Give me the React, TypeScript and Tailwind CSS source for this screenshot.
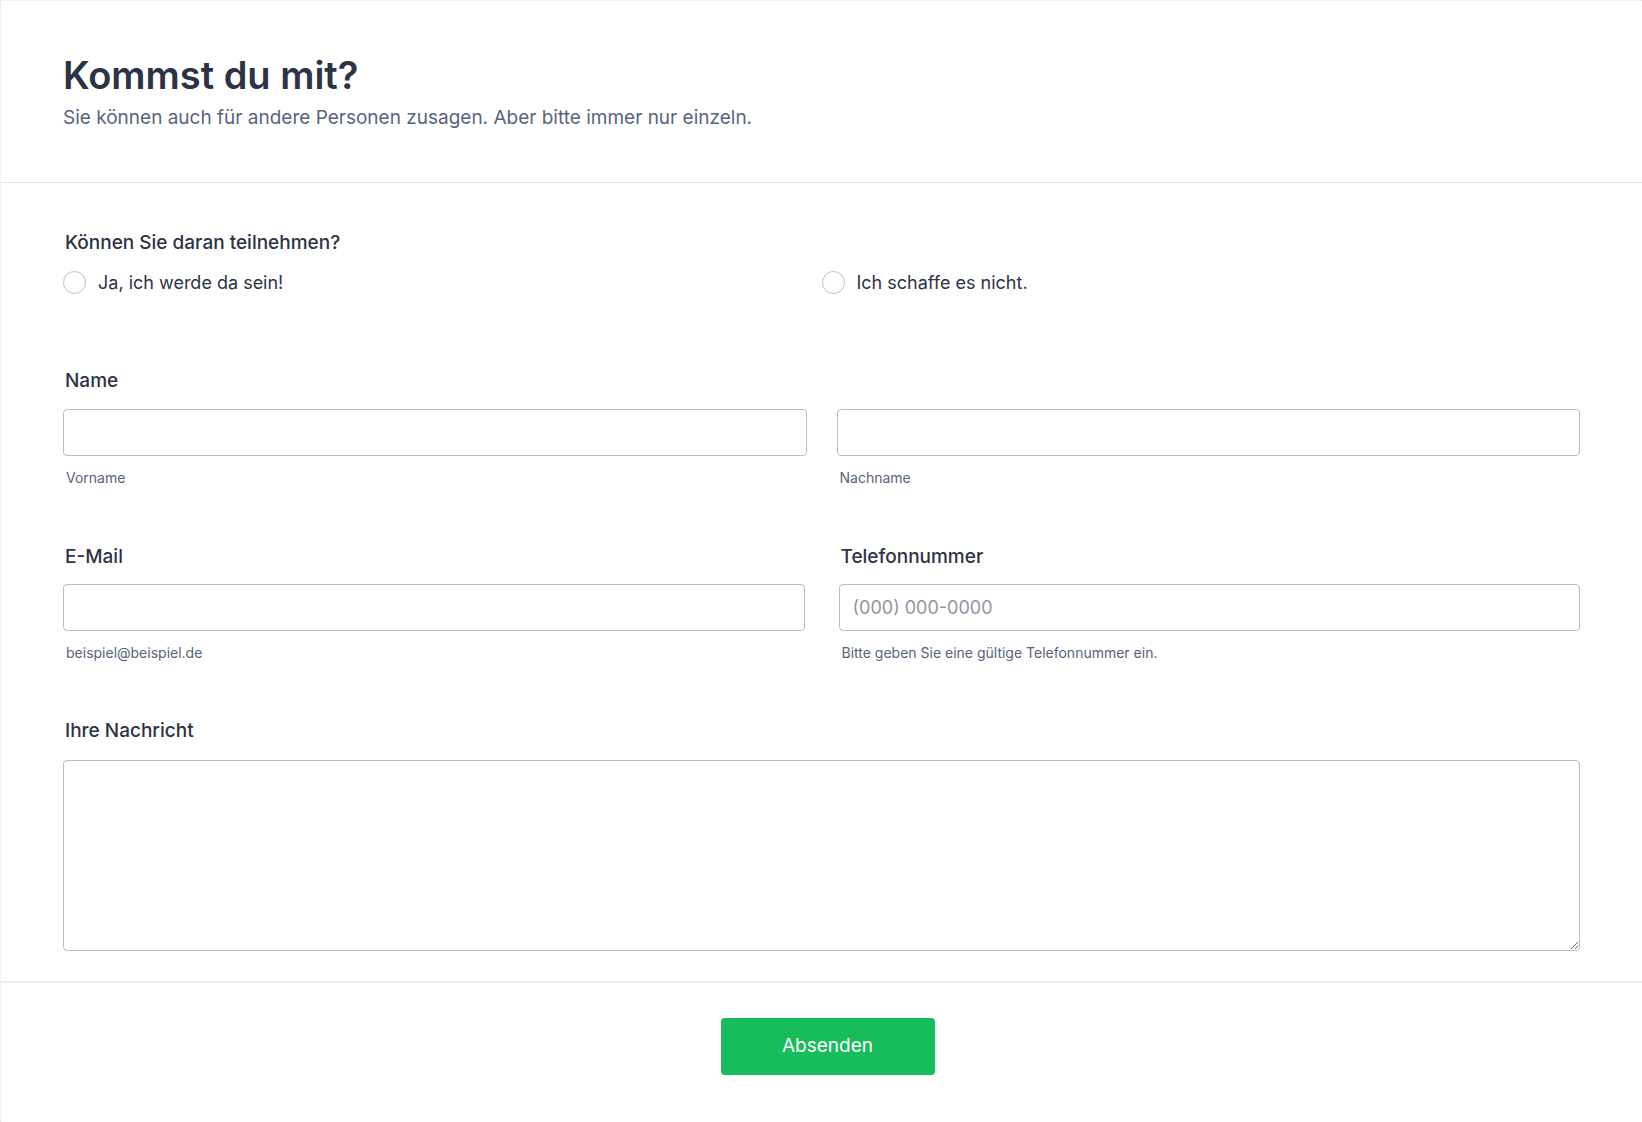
import React, { useState } from 'react';

const font = { fontFamily: 'Inter, "Noto Sans", sans-serif' };

const inputClass =
  'w-full h-[47px] border border-[#b8bdc9] rounded-[4px] bg-white px-[13px] text-[18px] text-[#2c3345] placeholder:text-[#8f96a3] outline-none focus:border-[#2e69ff]';

const Label = ({ children, htmlFor }: { children: React.ReactNode; htmlFor?: string }) => (
  <label htmlFor={htmlFor} className="block pl-[2px] text-[19px] leading-[27px] font-medium text-[#2c3345]">
    {children}
  </label>
);

const SubLabel = ({ children }: { children: React.ReactNode }) => (
  <p className="pl-[3px] mt-[11px] text-[14px] leading-[21px] text-[#57647e]">{children}</p>
);

const Radio = ({
  label,
  checked,
  onSelect,
}: {
  label: string;
  checked: boolean;
  onSelect: () => void;
}) => (
  <label className="flex items-center gap-[12px] h-[27px] cursor-pointer" onClick={onSelect}>
    <span className="w-[23px] h-[23px] rounded-full border-[1.5px] border-[#bcc1cc] bg-white flex items-center justify-center shrink-0">
      {checked && <span className="w-[11px] h-[11px] rounded-full bg-[#2e69ff]" />}
    </span>
    <span className="text-[18px] leading-[27px] text-[#2c3345]">{label}</span>
  </label>
);

export default function App() {
  const [attend, setAttend] = useState<string | null>(null);

  return (
    <div style={font} className="min-h-[1122px] bg-white border-l border-t border-dotted border-[#e3e5ea]">
      {/** Header */}
      <header className="px-[62px] pt-[51px] pb-[51px] border-b border-[#e3e5ea]">
        <h1 className="text-[38px] leading-[46px] font-semibold text-[#2c3345]">Kommst du mit?</h1>
        <p className="mt-[6px] text-[19px] leading-[27px] text-[#57647e]">
          Sie können auch für andere Personen zusagen. Aber bitte immer nur einzeln.
        </p>
      </header>

      <form className="px-[62px]" onSubmit={(e) => e.preventDefault()}>
        {/** Attendance */}
        <div className="pt-[46px]">
          <Label>Können Sie daran teilnehmen?</Label>
          <div className="grid grid-cols-2 mt-[13px]">
            <Radio label="Ja, ich werde da sein!" checked={attend === 'yes'} onSelect={() => setAttend('yes')} />
            <Radio label="Ich schaffe es nicht." checked={attend === 'no'} onSelect={() => setAttend('no')} />
          </div>
        </div>

        {/** Name */}
        <div className="mt-[71px]">
          <Label>Name</Label>
          <div className="grid grid-cols-2 gap-[30px] mt-[15px]">
            <div>
              <input id="first" type="text" className={inputClass} />
              <SubLabel>Vorname</SubLabel>
            </div>
            <div>
              <input id="last" type="text" className={inputClass} />
              <SubLabel>Nachname</SubLabel>
            </div>
          </div>
        </div>

        {/** Email + phone */}
        <div className="grid grid-cols-2 gap-[34px] mt-[55px]">
          <div>
            <Label htmlFor="email">E-Mail</Label>
            <input id="email" type="email" className={`${inputClass} mt-[14px]`} />
            <SubLabel>beispiel@beispiel.de</SubLabel>
          </div>
          <div>
            <Label htmlFor="phone">Telefonnummer</Label>
            <input id="phone" type="tel" placeholder="(000) 000-0000" className={`${inputClass} mt-[14px]`} />
            <SubLabel>Bitte geben Sie eine gültige Telefonnummer ein.</SubLabel>
          </div>
        </div>

        {/** Message */}
        <div className="mt-[54px]">
          <Label htmlFor="msg">Ihre Nachricht</Label>
          <textarea
            id="msg"
            className="block w-full h-[191px] mt-[16px] border border-[#b8bdc9] rounded-[4px] bg-white p-[13px] text-[18px] text-[#2c3345] outline-none"
          />
        </div>
      </form>

      {/** Footer */}
      <div className="mt-[30px] border-t-2 border-[#ebedf2] pt-[35px] pb-[47px] pl-[12px] flex justify-center">
        <button
          type="submit"
          className="w-[214px] h-[57px] rounded-[4px] bg-[#18bd5b] text-white text-[19px] font-normal hover:bg-[#16a34f]"
        >
          Absenden
        </button>
      </div>
    </div>
  );
}
